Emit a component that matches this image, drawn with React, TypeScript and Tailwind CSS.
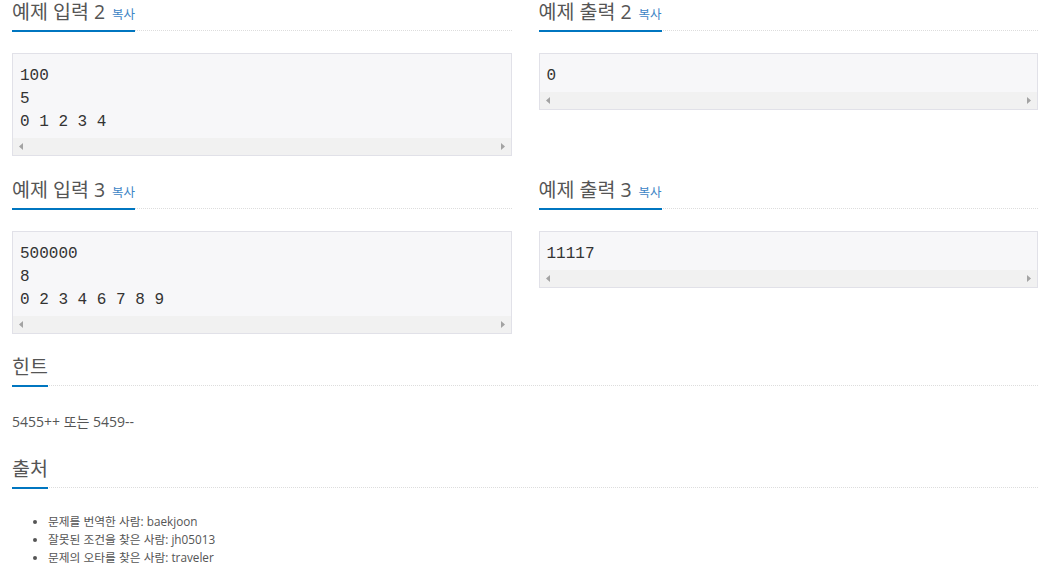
import React from "react";

const sans = "font-['Open_Sans','Noto_Sans_CJK_KR',sans-serif]";

function Headline({ title, copy }: { title: string; copy?: boolean }) {
  return (
    <div className="flex items-end h-[31px] border-b border-dotted border-[#dddddd]">
      <h2
        className={`${sans} flex items-baseline h-[32px] text-[19.5px] leading-[24px] font-normal text-[#555555] pb-[6px] border-b-2 border-[#0076c0] mb-[-2px]`}
      >
        <span>{title}</span>
        {copy && (
          <span className="ml-[7px] text-[12.5px] text-[#3d85c6]">복사</span>
        )}
      </h2>
    </div>
  );
}

function Arrow({ dir }: { dir: "left" | "right" }) {
  return (
    <svg width="4" height="7" viewBox="0 0 4 7">
      <polygon
        points={dir === "left" ? "4,0 4,7 0,3.5" : "0,0 0,7 4,3.5"}
        fill="#a3a3a3"
      />
    </svg>
  );
}

function Sample({ lines }: { lines: string[] }) {
  return (
    <div className="mt-[22px] border border-[#e1e1e8] bg-[#f7f7f9]">
      <pre className="font-['Liberation_Mono',monospace] text-[16px] leading-[23px] text-[#333333] px-[7px] pt-[11px] pb-[4px] m-0">
        {lines.join("\n")}
      </pre>
      <div className="h-[17px] bg-[#f1f1f1] flex items-center justify-between px-[6px]">
        <Arrow dir="left" />
        <Arrow dir="right" />
      </div>
    </div>
  );
}

function Section({ title, lines }: { title: string; lines: string[] }) {
  return (
    <section>
      <Headline title={title} copy />
      <Sample lines={lines} />
    </section>
  );
}

export default function App() {
  return (
    <div className="w-[1048px] h-[567px] overflow-hidden bg-white pl-[12px] pr-[10px]">
      <div className="grid grid-cols-2 gap-x-[27px] items-start">
        <Section title="예제 입력 2" lines={["100", "5", "0 1 2 3 4"]} />
        <Section title="예제 출력 2" lines={["0"]} />
      </div>
      <div className="grid grid-cols-2 gap-x-[27px] items-start mt-[22px]">
        <Section title="예제 입력 3" lines={["500000", "8", "0 2 3 4 6 7 8 9"]} />
        <Section title="예제 출력 3" lines={["11117"]} />
      </div>

      <section className="mt-[21px]">
        <Headline title="힌트" />
        <p className={`${sans} mt-[26px] text-[14px] leading-[20px] text-[#555555]`}>
          5455++ 또는 5459--
        </p>
      </section>

      <section className="mt-[25px]">
        <Headline title="출처" />
        <ul
          className={`${sans} mt-[24px] list-disc pl-[36px] text-[11.75px] leading-[18px] text-[#555555]`}
        >
          <li>문제를 번역한 사람: baekjoon</li>
          <li>잘못된 조건을 찾은 사람: jh05013</li>
          <li>문제의 오타를 찾은 사람: traveler</li>
        </ul>
      </section>
    </div>
  );
}
